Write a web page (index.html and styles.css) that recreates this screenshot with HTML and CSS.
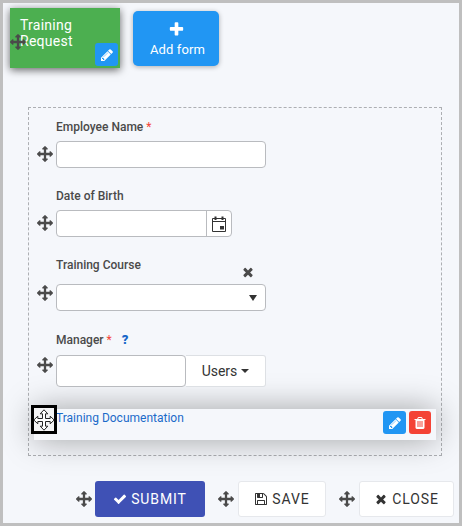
FILE: index.html
```html
<!DOCTYPE html>
<html lang="en">
<head>
<meta charset="utf-8">
<title>Form designer</title>
<link rel="stylesheet" href="styles.css">
</head>
<body>
<svg class="defs" aria-hidden="true">
<symbol id="move" viewBox="0 0 1792 1792"><path d="M1792 896q0 26-19 45l-256 256q-19 19-45 19t-45-19-19-45v-128h-384v384h128q26 0 45 19t19 45-19 45l-256 256q-19 19-45 19t-45-19l-256-256q-19-19-19-45t19-45 45-19h128v-384h-384v128q0 26-19 45t-45 19-45-19l-256-256q-19-19-19-45t19-45l256-256q19-19 45-19t45 19 19 45v128h384v-384h-128q-26 0-45-19t-19-45 19-45l256-256q19-19 45-19t45 19l256 256q19 19 19 45t-19 45-45 19h-128v384h384v-128q0-26 19-45t45-19 45 19l256 256q19 19 19 45z"/></symbol>
<symbol id="pencil" viewBox="0 0 1792 1792"><path d="M491 1536l91-91-235-235-91 91v107h128v128h107zm523-928q0-22-22-22-10 0-17 7l-542 542q-7 7-7 17 0 22 22 22 10 0 17-7l542-542q7-7 7-17zm-54-192l416 416-832 832h-416v-416zm683 96q0 53-37 90l-166 166-416-416 166-165q36-38 90-38 53 0 91 38l235 234q37 39 37 91z"/></symbol>
<symbol id="plus" viewBox="0 0 1792 1792"><path d="M1600 736v192q0 40-28 68t-68 28h-416v416q0 40-28 68t-68 28h-192q-40 0-68-28t-28-68v-416h-416q-40 0-68-28t-28-68v-192q0-40 28-68t68-28h416v-416q0-40 28-68t68-28h192q40 0 68 28t28 68v416h416q40 0 68 28t28 68z"/></symbol>
<symbol id="times" viewBox="0 0 1792 1792"><path d="M1490 1322q0 40-28 68l-136 136q-28 28-68 28t-68-28l-294-294-294 294q-28 28-68 28t-68-28l-136-136q-28-28-28-68t28-68l294-294-294-294q-28-28-28-68t28-68l136-136q28-28 68-28t68 28l294 294 294-294q28-28 68-28t68 28l136 136q28 28 28 68t-28 68l-294 294 294 294q28 28 28 68z"/></symbol>
<symbol id="check" viewBox="0 0 1792 1792"><path d="M1671 566q0 40-28 68l-724 724-136 136q-28 28-68 28t-68-28l-136-136-362-362q-28-28-28-68t28-68l136-136q28-28 68-28t68 28l294 295 656-657q28-28 68-28t68 28l136 136q28 28 28 68z"/></symbol>
<symbol id="floppy" viewBox="0 0 1792 1792"><path d="M512 1536h768v-384h-768v384zm896 0h128v-896q0-14-10-38.5t-20-34.5l-281-281q-10-10-34-20t-39-10v416q0 40-28 68t-68 28h-576q-40 0-68-28t-28-68v-416h-128v1280h128v-416q0-40 28-68t68-28h832q40 0 68 28t28 68v416zm-384-928v-320q0-13-9.500-22.500t-22.500-9.500h-192q-13 0-22.500 9.500t-9.500 22.500v320q0 13 9.500 22.500t22.500 9.500h192q13 0 22.500-9.500t9.500-22.500zm640 32v928q0 40-28 68t-68 28h-1344q-40 0-68-28t-28-68v-1344q0-40 28-68t68-28h928q40 0 88 20t76 48l280 280q28 28 48 76t20 88z"/></symbol>
<symbol id="trash" viewBox="0 0 1792 1792"><path d="M704 1376v-704q0-14-9-23t-23-9h-64q-14 0-23 9t-9 23v704q0 14 9 23t23 9h64q14 0 23-9t9-23zm256 0v-704q0-14-9-23t-23-9h-64q-14 0-23 9t-9 23v704q0 14 9 23t23 9h64q14 0 23-9t9-23zm256 0v-704q0-14-9-23t-23-9h-64q-14 0-23 9t-9 23v704q0 14 9 23t23 9h64q14 0 23-9t9-23zm-544-992h448l-48-117q-7-9-17-11h-317q-10 2-17 11zm928 32v64q0 14-9 23t-23 9h-96v948q0 83-47 143.500t-113 60.500h-832q-66 0-113-58.500t-47-141.500v-952h-96q-14 0-23-9t-9-23v-64q0-14 9-23t23-9h309l70-167q15-37 54-63t79-26h320q40 0 79 26t54 63l70 167h309q14 0 23 9t9 23z"/></symbol>
</svg>
<div class="frame">
  <header class="tabs">
    <div class="tab">Training<br>Request
      <svg class="icon tab-move"><use href="#move"/></svg>
      <span class="mini tab-edit"><svg class="icon s14"><use href="#pencil"/></svg></span>
    </div>
    <div class="add"><svg class="icon s17"><use href="#plus"/></svg><span>Add form</span></div>
  </header>
  <main class="form">
    <div class="field name">
      <div class="label">Employee Name <span class="req">*</span></div>
      <div class="control"><svg class="icon grip"><use href="#move"/></svg><div class="input wide"></div></div>
    </div>
    <div class="field birth">
      <div class="label">Date of Birth</div>
      <div class="control"><svg class="icon grip"><use href="#move"/></svg><div class="input date"><span class="cal"><svg class="cal-icon" viewBox="0 0 16 16"><path fill="none" stroke="#333" d="M1.500 2.500h13v13h-13zM1.500 5.500h13"/><path d="M3.500 .5h2v3.500h-2zM10.500 .5h2v3.500h-2zM9 10h4v3.500H9z"/></svg></span></div></div>
    </div>
    <div class="field course">
      <div class="label">Training Course</div>
      <div class="control"><svg class="icon grip"><use href="#move"/></svg><div class="input wide select"><span class="caret big"></span></div><svg class="icon s14 clear"><use href="#times"/></svg></div>
    </div>
    <div class="field manager">
      <div class="label">Manager <span class="req">*</span><span class="help">?</span></div>
      <div class="control"><svg class="icon grip"><use href="#move"/></svg><div class="input user"></div><div class="users">Users<span class="caret"></span></div></div>
    </div>
    <div class="doc">
      <span class="doc-title">Training Documentation</span>
      <span class="mini"><svg class="icon s14"><use href="#pencil"/></svg></span>
      <span class="mini red"><svg class="icon s14"><use href="#trash"/></svg></span>
      <div class="marker"><svg class="cursor" viewBox="0 0 22 22"><path d="M11 .8l3.800 4h-2.300v4.700h4.700V7.200l4 3.800-4 3.800v-2.300h-4.700v4.700h2.300l-3.800 4-3.800-4h2.300v-4.700H4.800v2.300l-4-3.800 4-3.800v2.300h4.700V4.800H7.200z"/></svg></div>
    </div>
  </main>
  <footer class="actions">
    <svg class="icon"><use href="#move"/></svg>
    <div class="btn submit"><svg class="icon s14"><use href="#check"/></svg>SUBMIT</div>
    <svg class="icon"><use href="#move"/></svg>
    <div class="btn save"><svg class="icon s14"><use href="#floppy"/></svg>SAVE</div>
    <svg class="icon"><use href="#move"/></svg>
    <div class="btn close"><svg class="icon s14"><use href="#times"/></svg>CLOSE</div>
  </footer>
</div>
</body>
</html>
```
FILE: styles.css
```css
* { box-sizing: border-box; }
body { margin: 0; font-family: Roboto, sans-serif; font-size: 12px; color: #4a4a4a; }
.defs { display: none; }
.frame { width: 462px; height: 526px; border: 3px solid #bfbfbf; background: #f5f7fb; overflow: hidden; }
.icon { display: block; flex: none; width: 16px; height: 16px; fill: #4a4a4a; }
.s14 { width: 14px; height: 14px; }
.s17 { width: 17px; height: 17px; }
.tabs { display: flex; gap: 13px; padding: 5px 7px 0; height: 104px; color: #fff; }
.tab { position: relative; width: 110px; height: 60px; padding: 9px 10px; background: #4caf50; font-size: 14px; line-height: 16px; letter-spacing: .25px; box-shadow: 0 2px 8px rgba(0,0,0,.6); }
.tab-move { position: absolute; left: 0; top: 26px; }
.mini { display: flex; align-items: center; justify-content: center; width: 23px; height: 23px; border-radius: 3px; background: #2196f3; }
.mini .icon, .add .icon, .submit .icon { fill: #fff; }
.tab-edit { position: absolute; right: 2px; bottom: 2px; }
.add { display: flex; flex-direction: column; align-items: center; width: 86px; height: 55px; margin-top: 3px; padding-top: 10px; border-radius: 5px; background: #2196f3; font-size: 13px; line-height: 24px; letter-spacing: .1px; box-shadow: 0 1px 5px rgba(0,0,0,.3); }
.add span { margin-left: 3px; }
.form { width: 414px; height: 349px; margin-left: 25px; padding: 12px 5px 0; border: 1px dashed #adafb3; }
.field { padding-left: 3px; }
.name, .birth { height: 69px; }
.course { height: 75px; }
.manager { height: 76px; }
.label { height: 14px; margin-left: 19px; font-weight: 500; line-height: 14px; }
.control { position: relative; display: flex; margin-top: 7px; }
.grip { margin: 5px 3px 0 0; }
.input { height: 27px; border: 1px solid #b9bbbf; border-radius: 4px; background: #fff; }
.wide { width: 210px; }
.date { display: flex; justify-content: flex-end; width: 176px; }
.cal { display: flex; align-items: center; justify-content: center; width: 25px; border-left: 1px solid #b9bbbf; }
.cal-icon { width: 16px; height: 16px; fill: #333; }
.req { color: #f44336; font-weight: 400; }
.help { margin-left: 10px; color: #1565c8; font-size: 13px; font-weight: 900; }
.course .control { margin-top: 12px; }
.course .grip { margin-top: 1px; }
.select { display: flex; align-items: center; justify-content: flex-end; padding-right: 8px; }
.caret { border: 4px solid transparent; border-top-color: #333; border-bottom: 0; margin-left: 4px; }
.caret.big { border-top-width: 6px; }
.clear { position: absolute; left: 204px; top: -19px; }
.manager .control { margin-top: 8px; }
.manager .grip { margin-top: 2px; }
.user { width: 130px; height: 32px; }
.users { display: flex; align-items: center; justify-content: center; width: 80px; height: 32px; border: 1px solid #dde0e4; border-left: 0; border-radius: 0 3px 3px 0; background: #fff; color: #333; font-size: 14px; }
.users, .user { position: relative; z-index: 1; }
.doc { position: relative; display: flex; align-items: flex-start; gap: 3px; width: 402px; height: 31px; padding: 2px 5px 0 22px; background: #f5f7fb; box-shadow: 0 0 32px rgba(0,0,0,.36); }
.doc-title { flex: 1; line-height: 14px; color: #1b6ac9; }
.red { width: 22px; background: #f44336; }
.marker { position: absolute; left: -3px; top: -4px; display: flex; align-items: center; justify-content: center; width: 26px; height: 29px; border: 3px solid #000; background: #f4f4f5; }
.cursor { flex: none; width: 22px; height: 22px; fill: #fff; stroke: #222; }
.actions { position: relative; display: flex; align-items: center; height: 36px; margin: 25px 2px 0 73px; }
.btn { display: flex; flex: none; align-items: center; justify-content: center; height: 36px; margin: 0 13px 0 4px; border: 1px solid #e6e8ec; border-radius: 3px; background: #fff; color: #333; font-size: 14px; letter-spacing: .9px; gap: 4px; }
.btn .icon { fill: #333; }
.submit { width: 110px; margin-left: 3px; border: 0; background: #3f51b5; color: #fff; }
.btn.submit .icon { fill: #fff; }
.save { width: 88px; }
.close { width: 95px; margin-right: 0; }
```
